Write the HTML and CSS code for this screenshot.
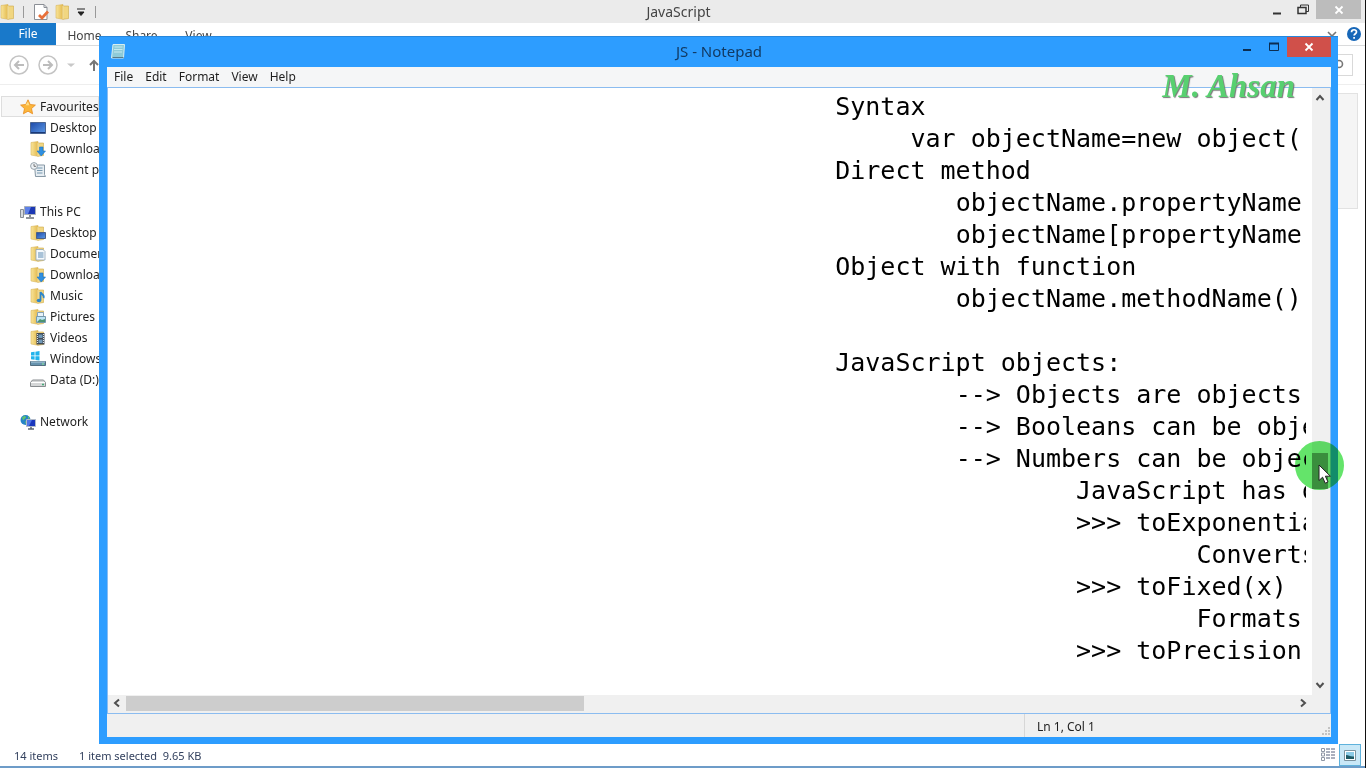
FILE: index.html
```html
<!DOCTYPE html>
<html lang="en">
<head>
<meta charset="utf-8">
<title>JS - Notepad</title>
<link rel="stylesheet" href="styles.css">
</head>
<body>
<svg class="defs" aria-hidden="true">
  <defs>
    <linearGradient id="gold" x1="0" x2="1"><stop offset="0" stop-color="#f9e59a"/><stop offset="1" stop-color="#e3b94d"/></linearGradient>
    <linearGradient id="screen" x1="0" y1="0" x2="1" y2="1"><stop offset="0" stop-color="#1d49a8"/><stop offset="1" stop-color="#5d9ae6"/></linearGradient>
    <symbol id="folder" viewBox="0 0 16 16">
      <path d="M1 1.5 8 .5v14.8L1 14z" fill="url(#gold)" stroke="#d9b65a" stroke-width=".6"/>
      <path d="M8 2h5.500v12.500L8 15.300z" fill="#f1d680" stroke="#cfa948" stroke-width=".6"/>
      <path d="M8 2v13" stroke="#fff3c0" stroke-width=".8"/>
    </symbol>
  </defs>
</svg>

<main class="explorer">
  <header class="ex-title">
    <div class="quick">
      <svg class="i16" viewBox="0 0 16 16"><use href="#folder"/></svg>
      <span class="bar"></span>
      <button aria-label="Properties"><svg class="i16" viewBox="0 0 16 16"><path d="M1.500.5h9.500l3 3v12h-12.500z" fill="#fff" stroke="#8b8f96"/><path d="M11 .5v3h3" fill="none" stroke="#8b8f96"/><path d="m6 11 3 3 6-6.500" fill="none" stroke="#e8703a" stroke-width="2.800"/></svg></button>
      <button aria-label="New folder"><svg class="i16" viewBox="0 0 16 16"><use href="#folder"/></svg></button>
      <button aria-label="Customise toolbar"><svg class="i8" viewBox="0 0 8 8"><path d="M0 1h8M1 4l3 3.500L7 4z" fill="#222" stroke="#222" stroke-width="1"/></svg></button>
      <span class="bar"></span>
    </div>
    <h2>JavaScript</h2>
    <div class="ex-controls">
      <button aria-label="Minimise folder"><svg class="i12" viewBox="0 0 12 12"><path d="M2 9.500h8" stroke="#333" stroke-width="2"/></svg></button>
      <button aria-label="Restore folder"><svg class="i12" viewBox="0 0 12 12"><path d="M3.500 3V1h8v6.500H9" fill="none" stroke="#333"/><path d="M1 3.500h8v6H1z" fill="none" stroke="#333" stroke-width="1.500"/></svg></button>
      <button class="ex-close" aria-label="Close folder"><svg class="i12" viewBox="0 0 12 12"><path d="m2.500 2.500 7 7m0-7-7 7" stroke="#fff" stroke-width="1.800"/></svg></button>
    </div>
  </header>

  <nav class="tabs">
    <button class="file">File</button>
    <button>Home</button>
    <button>Share</button>
    <button>View</button>
    <button class="expand" aria-label="Expand ribbon"><svg class="i12" viewBox="0 0 12 12"><path d="m2 4 4 4 4-4" fill="none" stroke="#777" stroke-width="1.600"/></svg></button>
    <button class="help" aria-label="Help"><svg class="i16" viewBox="0 0 16 16"><circle cx="8" cy="8" r="7" fill="#1767b8"/><path d="M5.500 6.200C5.500 3 10.700 3 10.500 6c0 1.700-2.400 1.800-2.400 3.600M8.100 11v1.700" fill="none" stroke="#fff" stroke-width="1.700"/></svg></button>
  </nav>

  <div class="address">
    <button aria-label="Back"><svg class="i20" viewBox="0 0 20 20"><circle cx="10" cy="10" r="9" fill="none" stroke="#c4c4c4" stroke-width="1.500"/><path d="M15 10H6m4-4-4 4 4 4" fill="none" stroke="#bcbcbc" stroke-width="2"/></svg></button>
    <button aria-label="Forward"><svg class="i20" viewBox="0 0 20 20"><circle cx="10" cy="10" r="9" fill="none" stroke="#c4c4c4" stroke-width="1.500"/><path d="M5 10h9m-4-4 4 4-4 4" fill="none" stroke="#bcbcbc" stroke-width="2"/></svg></button>
    <button class="recent" aria-label="Recent locations"><svg class="i8" viewBox="0 0 8 8"><path d="M0 2.500h8L4 6z" fill="#c8c8c8"/></svg></button>
    <button aria-label="Up"><svg class="i12" viewBox="0 0 12 12"><path d="M6 12V2M2 6l4-4 4 4" fill="none" stroke="#777" stroke-width="2"/></svg></button>
    <div class="search">
      <input type="search" aria-label="Search folder">
      <svg class="i12" viewBox="0 0 12 12"><circle cx="7" cy="5" r="3.500" fill="none" stroke="#777" stroke-width="1.600"/><path d="m4.500 7.500-4 4" stroke="#777" stroke-width="2"/></svg>
    </div>
  </div>

  <div class="ex-body">
    <aside class="tree">
      <section>
        <a class="root selected" href="#fav"><svg class="i16" viewBox="0 0 16 16"><path d="m8 .8 2.200 4.700 5.200.6-3.900 3.500 1.100 5.200L8 12.200l-4.600 2.600 1.100-5.200L.6 6.100l5.200-.6z" fill="#fbb63c" stroke="#e88a1a" stroke-width=".8"/><path d="m8 2.500 1.300 3.800H5.500z" fill="#ffe08a"/></svg>Favourites</a>
        <a href="#desktop"><svg class="i16" viewBox="0 0 16 16"><path d="M.5 2.500h15v11H.5z" fill="url(#screen)" stroke="#4b6591"/><path d="M1 12.500h14" stroke="#1a3978"/></svg>Desktop</a>
        <a href="#downloads"><svg class="i16" viewBox="0 0 16 16"><use href="#folder"/><path d="M9.500 6h3.500v4h2.500l-4.300 5L7 10h2.500z" fill="#2f8fe0" stroke="#1b73c4" stroke-width=".6"/></svg>Downloads</a>
        <a href="#recent"><svg class="i16" viewBox="0 0 16 16"><path d="M4.500 3h10v9.500l1 2H5.500z" fill="#e6edf2" stroke="#8798a5"/><path d="M7 6h5.500M7 8.500h5.500M7 11h5.500" stroke="#7798af"/><circle cx="4" cy="4" r="3.400" fill="#eef2f5" stroke="#97a2ab"/><path d="M4 2v2.300h2" fill="none" stroke="#555" stroke-width=".8"/></svg>Recent places</a>
      </section>
      <section>
        <a class="root" href="#pc"><svg class="i16" viewBox="0 0 16 16"><path d="M.5 5.500h3v8h-3z" fill="#d5d9de" stroke="#878d94"/><path d="M4.500 2.500h11v8h-11z" fill="#1c38b4" stroke="#a9b0ba"/><path d="m5 3 6 0-3 7H5z" fill="#5d80e8"/><path d="M10 11v2m-4 1h8" stroke="#6b7179" stroke-width="1.600"/></svg>This PC</a>
        <a href="#pc-desktop"><svg class="i16" viewBox="0 0 16 16"><use href="#folder"/><path d="M6.500 7.500h9v6h-9z" fill="url(#screen)" stroke="#4c6187"/></svg>Desktop</a>
        <a href="#documents"><svg class="i16" viewBox="0 0 16 16"><use href="#folder"/><path d="M6 3.500h7l2 2V14H6z" fill="#f5f9fc" stroke="#8fa5b6" stroke-width=".8"/><path d="M8 7h5.500M8 9h5.500M8 11h5.500" stroke="#5c8cb4"/></svg>Documents</a>
        <a href="#pc-downloads"><svg class="i16" viewBox="0 0 16 16"><use href="#folder"/><path d="M9.500 6h3.500v4h2.500l-4.300 5L7 10h2.500z" fill="#2f8fe0" stroke="#1b73c4" stroke-width=".6"/></svg>Downloads</a>
        <a href="#music"><svg class="i16" viewBox="0 0 16 16"><use href="#folder"/><path d="M10.500 12V4c.5 2 4.500 3 3 6" fill="none" stroke="#2d85c9" stroke-width="1.800"/><ellipse cx="9" cy="12.500" rx="2.300" ry="1.800" fill="#2d85c9"/></svg>Music</a>
        <a href="#pictures"><svg class="i16" viewBox="0 0 16 16"><use href="#folder"/><path d="M7.500 3.500h6v7h-6z" fill="#e8f3fa" stroke="#86a3b8"/><path d="M6.500 7.500h9v6h-9z" fill="#bde3f5" stroke="#7799ad"/><path d="m7 13 3-3 2 1 3-1v3z" fill="#4c9472"/></svg>Pictures</a>
        <a href="#videos"><svg class="i16" viewBox="0 0 16 16"><use href="#folder"/><path d="M6.500 3h8v11.500h-8z" fill="#434b55"/><path d="M7.500 4v10M13.500 4v10" stroke="#dce2e7" stroke-dasharray="1 1"/><path d="M8.500 4.500h4V8h-4zM8.500 9.500h4V13h-4z" fill="#7099b8"/></svg>Videos</a>
        <a href="#windows"><svg class="i16" viewBox="0 0 16 16"><path d="M1 1.300 4.600.8v3.600H1zM5.400.7 9.500.1v4.300H5.400zM1 5.200h3.600v3.600L1 8.300zM5.400 5.200h4.100v4.300l-4.100-.6z" fill="#22b3ec"/><path d="M.5 10.500h15v4H.5z" fill="#6793ae" stroke="#526e80"/><path d="M1 11h14" stroke="#b3d0e0"/><path d="M12 13h2" stroke="#8cf39a"/></svg>Windows (C:)</a>
        <a href="#data"><svg class="i16" viewBox="0 0 16 16"><path d="M.5 10.500 2.500 8h11l2 2.500V14.500h-15z" fill="#d5d7d8" stroke="#898d90"/><path d="M1 10.500h14" stroke="#fff"/><path d="M12 12.500h2" stroke="#4a7" stroke-width="1.400"/></svg>Data (D:)</a>
      </section>
      <section>
        <a class="root" href="#network"><svg class="i16" viewBox="0 0 16 16"><circle cx="5.500" cy="6" r="5" fill="#2683c8"/><path d="M2 3.500 5 1.500l1 2-3 3zM5 7l3 2-2 2zM8 2l2 2-2 1z" fill="#61c36c"/><path d="M6.500 5.500h9v7h-9z" fill="#1a37bd" stroke="#b1bac9"/><path d="M7 6h5l-3 6H7z" fill="#4f74e5"/><path d="M11 13v1.500m-3 .5h6" stroke="#5c6570" stroke-width="1.500"/></svg>Network</a>
      </section>
    </aside>
    <div class="details"></div>
  </div>

  <footer class="ex-status">
    <span>14 items</span>
    <span>1 item selected&nbsp; 9.65 KB</span>
    <div class="views">
      <button aria-label="Details view"><svg class="i16" viewBox="0 0 16 16"><path d="M1.500 1.500h3v3h-3zM1.500 6h3v3h-3zM1.500 10.500h3v3h-3z" fill="#fff" stroke="#8f96a5"/><path d="M6 2h4M11 2h4M6 5h4M11 5h4M6 8h4M11 8h4M6 11h4M11 11h4" stroke="#56617c"/></svg></button>
      <button class="active" aria-label="Thumbnail view"><svg class="i16" viewBox="0 0 16 16"><path d="M2.500 3.500h11v10h-11z" fill="#fff" stroke="#7b929e"/><path d="M4 5h8v7H4z" fill="#8ccbe6"/><path d="M4 8c3 0 4 2 8 1.500V12H4z" fill="#1d5964"/></svg></button>
    </div>
  </footer>
  <div class="taskbar"></div>
</main>

<section class="notepad">
  <header class="np-title">
    <svg class="i16" viewBox="0 0 16 16"><path d="M3 1.500h11.500L13.500 15H1.500z" fill="#8ecbd8" stroke="#d8eef0"/><path d="M4.500 4h8M4 6.500h8.500M4 9h8" stroke="#c6eaf0"/><path d="M2.500 14.500h11" stroke="#5a7b88"/></svg>
    <h1>JS - Notepad</h1>
    <div class="np-controls">
      <button aria-label="Minimise"><svg class="i12" viewBox="0 0 12 12"><path d="M2 9h8" stroke="#0c2d50" stroke-width="2"/></svg></button>
      <button aria-label="Maximise"><svg class="i12" viewBox="0 0 12 12"><path d="M1.500 2.500h9v7h-9z" fill="none" stroke="#0c2d50"/><path d="M1 2.500h10" stroke="#0c2d50" stroke-width="2"/></svg></button>
      <button class="np-close" aria-label="Close"><svg class="i12" viewBox="0 0 12 12"><path d="m2.500 2.500 7 7m0-7-7 7" stroke="#fff" stroke-width="1.800"/></svg></button>
    </div>
  </header>
  <nav class="menu">
    <button>File</button><button>Edit</button><button>Format</button><button>View</button><button>Help</button>
  </nav>
  <div class="editor">
    <textarea class="text" aria-label="Document text" wrap="off" spellcheck="false">
Syntax
     var objectName=new object(
Direct method
	objectName.propertyName
	objectName[propertyName
Object with function
	objectName.methodName()

JavaScript objects:
	--&gt; Objects are objects
	--&gt; Booleans can be objects
	--&gt; Numbers can be objects
		JavaScript has only
		&gt;&gt;&gt; toExponential
			Converts
		&gt;&gt;&gt; toFixed(x)
			Formats
		&gt;&gt;&gt; toPrecision</textarea>
    <div class="vscroll">
      <button aria-label="Scroll up"><svg class="i12" viewBox="0 0 12 12"><path d="m2.500 8 3.500-4 3.500 4" fill="none" stroke="#505050" stroke-width="2"/></svg></button>
      <div class="vtrack">
        <div class="vthumb">
          <span class="halo"></span>
          <svg class="pointer" viewBox="0 0 14 21"><path d="M1 1v15.500l3.600-3.300 2.600 6 2.800-1.200-2.600-5.800h5z" fill="#fff" stroke="#222"/></svg>
        </div>
      </div>
      <button aria-label="Scroll down"><svg class="i12" viewBox="0 0 12 12"><path d="m2.500 4 3.500 4 3.500-4" fill="none" stroke="#505050" stroke-width="2"/></svg></button>
    </div>
    <div class="hscroll">
      <button aria-label="Scroll left"><svg class="i12" viewBox="0 0 12 12"><path d="M8 2.500 4 6l4 3.500" fill="none" stroke="#505050" stroke-width="2"/></svg></button>
      <div class="htrack"><div class="hthumb"></div></div>
      <button aria-label="Scroll right"><svg class="i12" viewBox="0 0 12 12"><path d="m4 2.500 4 3.500-4 3.500" fill="none" stroke="#505050" stroke-width="2"/></svg></button>
    </div>
    <div class="corner"></div>
  </div>
  <footer class="np-status">
    <span class="position">Ln 1, Col 1</span>
    <svg class="i12" viewBox="0 0 12 12"><path d="M9 2h2v2H9zM9 5h2v2H9zM6 5h2v2H6zM9 8h2v2H9zM6 8h2v2H6zM3 8h2v2H3z" fill="#c3c3c3"/></svg>
  </footer>
  <span class="signature">M. Ahsan</span>
</section>
</body>
</html>
```

FILE: styles.css
```css
* { box-sizing: border-box; }

body {
  margin: 0;
  height: 100vh;
  overflow: hidden;
  position: relative;
  background: #fff;
  color: #1e1e1e;
  font: 12px/16px "Noto Sans", "Open Sans", sans-serif;
}

button {
  display: flex;
  align-items: center;
  justify-content: center;
  margin: 0;
  padding: 0;
  border: 0;
  background: none;
  color: inherit;
  font: inherit;
}

h1, h2 { margin: 0; font-size: 14px; line-height: 20px; font-weight: 400; }

svg { display: block; flex: none; }
.defs { position: absolute; width: 0; height: 0; }
.i8 { width: 8px; height: 8px; }
.i12 { width: 12px; height: 12px; }
.i16 { width: 16px; height: 16px; }
.i20 { width: 20px; height: 20px; }

/* Folder window */
.explorer {
  display: flex;
  flex-direction: column;
  height: 100%;
  border-right: 1px solid #111;
}

.ex-title {
  display: grid;
  grid-template-columns: 1fr auto 1fr;
  height: 23px;
  background: #ebebeb;
  color: #444;
}
.ex-title h2 { padding: 2px 8px 0 0; }
.quick { display: flex; align-items: center; gap: 7px; }
.bar { width: 1px; height: 12px; margin-right: 2px; background: #999; }
.quick button { margin-right: -1px; }
.quick button + .bar { margin-left: 4px; }
.ex-controls { display: flex; justify-content: flex-end; align-items: flex-start; padding-right: 4px; }
.ex-controls button { width: 26px; height: 19px; }
.ex-controls .ex-close { width: 45px; background: #bcbcbc; }

.tabs { display: flex; height: 23px; border-bottom: 1px solid #dadbdc; color: #444; }
.tabs button { width: 57px; padding-top: 4px; }
.tabs .file { width: 56px; background: #1979ca; color: #fff; padding: 0; }
.tabs .expand { width: 20px; margin-left: auto; padding: 0; }
.tabs .help { width: 23px; padding: 0; }

.address {
  display: flex;
  align-items: center;
  gap: 9px;
  height: 39px;
  padding: 0 12px 0 9px;
  border-bottom: 1px solid #eee;
}
.recent { padding-right: 4px; }
.search {
  display: flex;
  align-items: center;
  width: 180px;
  height: 22px;
  margin-left: auto;
  padding-right: 8px;
  border: 1px solid #d9d9d9;
}
.search input { flex: 1; min-width: 0; border: 0; outline: 0; }

.ex-body { display: flex; flex: 1; min-height: 0; padding-top: 11px; }
.tree { width: 99px; overflow: hidden; white-space: nowrap; }
.tree section { margin-bottom: 21px; }
.tree a {
  display: flex;
  align-items: center;
  gap: 4px;
  height: 21px;
  padding-left: 30px;
  color: #1e1e1e;
  text-decoration: none;
}
.tree .root { padding-left: 20px; }
.tree .selected { margin-left: 1px; padding-left: 18px; border: 1px solid #dedede; background: #f7f7f7; }
.details {
  width: 200px;
  height: 116px;
  margin: -3px 7px 0 auto;
  border: 1px solid #e2e2e2;
  background: #f5f5f5;
}

.ex-status { display: flex; align-items: center; gap: 21px; height: 22px; padding-left: 14px; color: #33415e; font-size: 11px; }
.ex-status span { padding-top: 2px; }
.views { display: flex; margin-left: auto; }
.views button { width: 22px; height: 22px; }
.views .active { border: 1px solid #5fb2dc; background: #c9e8f7; margin-right: 4px; }
.taskbar { height: 2px; background: #6d9cc8; }

/* Notepad window, floating over the folder */
.notepad {
  position: absolute;
  inset: 36px 28px 24px 99px;
  display: flex;
  flex-direction: column;
  padding: 0 7px 7px 8px;
  border-top: 1px solid #2787dc;
  background: #2d9dff;
}

.np-title { display: grid; grid-template-columns: 1fr auto 1fr; height: 30px; color: #123a63; }
.np-title > svg { margin: 6px 0 0 3px; }
.np-title h1 { padding-top: 4px; font-size: 15px; }
.np-controls { display: flex; justify-content: flex-end; }
.np-controls button { width: 27px; height: 20px; }
.np-controls .np-close { width: 44px; background: #d0504a; }

.menu { display: flex; gap: 12px; height: 20px; padding-left: 7px; background: #f5f6f7; }

.editor {
  flex: 1;
  min-height: 0;
  display: grid;
  grid-template-columns: 1fr 18px;
  grid-template-rows: 1fr 18px;
  border: 1px solid #8bbcf0;
  background: #fff;
}
.text {
  display: block;
  height: 100%;
  margin: 0 6px 0 60.4%;
  padding: 3px 0 0;
  border: 0;
  outline: 0;
  resize: none;
  overflow: hidden;
  white-space: pre;
  tab-size: 8;
  background: none;
  color: #000;
  font: 25px/32px "DejaVu Sans Mono", monospace;
}
.vscroll { display: flex; flex-direction: column; padding-right: 2px; background: #f0f0f0; }
.vscroll button { height: 20px; }
.vtrack { flex: 1; display: flex; flex-direction: column; padding-top: 345px; }
.vthumb { position: relative; height: 36px; background: #929f92; }
.halo {
  position: absolute;
  left: -17px;
  top: -12px;
  width: 49px;
  height: 49px;
  border-radius: 50%;
  background: #64e46a;
  mix-blend-mode: multiply;
}
.pointer { position: absolute; left: 6px; top: 11px; width: 14px; height: 21px; }
.hscroll { display: flex; padding-bottom: 2px; background: #f0f0f0; }
.hscroll button { width: 18px; }
.htrack { flex: 1; }
.hthumb { width: 39.2%; height: 15px; margin-top: 1px; background: #cdcdcd; }
.corner { background: #f0f0f0; }

.np-status { display: flex; justify-content: flex-end; align-items: flex-end; height: 23px; background: #f0f0f0; }
.position { width: 295px; height: 23px; padding: 5px 0 0 12px; border-left: 1px solid #d7d7d7; }

.signature {
  position: absolute;
  right: 43px;
  top: 32px;
  color: #58d070;
  font: italic 400 34px/34px "Liberation Serif", serif;
  font-size: 33px;
  font-weight: 700;
  text-shadow: 1px 1px 1px #777;
}
```
